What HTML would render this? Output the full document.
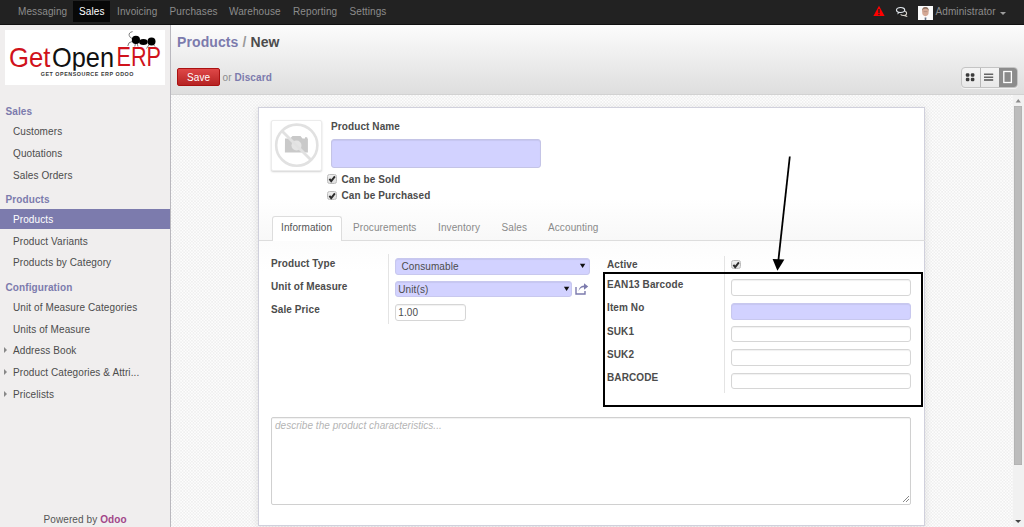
<!DOCTYPE html>
<html><head><meta charset="utf-8">
<style>
*{box-sizing:border-box;margin:0;padding:0}
html,body{width:1024px;height:527px;overflow:hidden;background:#fff}
body{font-family:"Liberation Sans",sans-serif;font-size:10px;color:#4c4c4c;position:relative}
.a{position:absolute}
.t{position:absolute;font-size:10px;line-height:11px;white-space:nowrap;letter-spacing:0.1px}
.b{font-weight:bold}
#nav{left:0;top:0;width:1024px;height:25px;background:#222;border-bottom:1px solid #111}
#nav .t{color:#8c8c8c}
#side{left:0;top:25px;width:171px;height:502px;background:#f0eeee;border-right:1px solid #b9b8be}
.sh{color:#7c7bad;font-weight:bold}
.si{color:#4c4c4c}
#hdr{left:171px;top:25px;width:853px;height:70px;background:linear-gradient(#fcfcfc,#dedede);border-bottom:1px solid #d2d2d2}
#bg{left:171px;top:95px;width:842px;height:432px;background-color:#f6f6f6}
#sb{left:1013px;top:95px;width:11px;height:432px;background:#f1f1f1}
#sheet{left:258px;top:107px;width:667px;height:419px;background:#fff;border:1px solid #d0d0dc;box-shadow:0 2px 8px rgba(0,0,0,.10)}
.inp{position:absolute;border:1px solid #ccc;border-radius:3px;background:#fff;box-shadow:inset 0 1px 1px rgba(0,0,0,.06)}
.req{background:#d2d2ff;border-color:#c4c4e6}
.cb{position:absolute;width:9.5px;height:9.5px;border:1px solid #bdbdbd;border-radius:2.5px;background:linear-gradient(#eeeeee,#dedede)}
</style></head><body>

<!-- top navbar -->
<div id="nav" class="a">
  <div class="a" style="left:73px;top:1px;width:37px;height:21px;background:#080808"></div>
  <div class="t" style="left:18px;top:6px">Messaging</div>
  <div class="t" style="left:79px;top:6px;color:#fff">Sales</div>
  <div class="t" style="left:117px;top:6px">Invoicing</div>
  <div class="t" style="left:169.5px;top:6px">Purchases</div>
  <div class="t" style="left:229px;top:6px">Warehouse</div>
  <div class="t" style="left:293px;top:6px">Reporting</div>
  <div class="t" style="left:349.5px;top:6px">Settings</div>
  <svg class="a" style="left:873px;top:5px" width="12" height="12" viewBox="0 0 12 12"><path d="M6 0.8 L11.6 11 L0.4 11 Z" fill="#f00"/><rect x="5.3" y="4" width="1.4" height="4" fill="#222"/><rect x="5.3" y="8.8" width="1.4" height="1.3" fill="#222"/></svg>
  <svg class="a" style="left:895px;top:6px" width="13" height="11" viewBox="0 0 13 11"><path d="M8.2 4.8 Q11.6 5 11.6 7.3 Q11.6 8.6 10.6 9 L11.4 10.2 L9 9.4 Q6.8 9.6 5.6 8.4" fill="#222" stroke="#d8d4cc" stroke-width="1.1"/><ellipse cx="5.6" cy="4" rx="4.1" ry="2.5" fill="#222" stroke="#e2e8ee" stroke-width="1.2"/><path d="M3.2 6.2 L2 8.4 L5.2 6.6" fill="#e2e8ee"/></svg>
  <svg class="a" style="left:918px;top:6px" width="15" height="14.2" viewBox="0 0 15 14.2">
   <rect width="15" height="14.2" fill="#fbfbfb"/>
   <ellipse cx="7.4" cy="5.6" rx="3.3" ry="4.6" fill="#d4a996"/>
   <path d="M4.1 5 Q4 1 7.4 1 Q10.8 1 10.7 5 Q10 2.6 7.4 2.8 Q4.8 2.6 4.1 5 Z" fill="#8d7262"/>
   <path d="M5.6 5.6 h3.8" stroke="#9a7c70" stroke-width="0.5"/>
   <path d="M6.6 11.6 h1.8 L8.2 14.2 h-1.4 Z" fill="#667489"/>
  </svg>
  <div class="t" style="left:935.5px;top:6px">Administrator</div>
  <div class="a" style="left:1000px;top:11.5px;width:0;height:0;border-left:3px solid transparent;border-right:3px solid transparent;border-top:3px solid #9d9d9d"></div>
</div>

<!-- sidebar -->
<div id="side" class="a">
  <div class="a" style="left:5px;top:5px;width:159.5px;height:54.5px;background:#fff"></div>
</div>
<svg class="a" style="left:0;top:24px" width="170" height="70" viewBox="0 24 170 70">
 <defs><clipPath id="lc"><rect x="0" y="24" width="170" height="46.8"/></clipPath></defs>
 <g font-family="Liberation Sans" font-size="28">
  <text x="9" y="66.6" fill="#d0121b" textLength="41.5" lengthAdjust="spacingAndGlyphs">Get</text>
  <text x="52" y="66.6" fill="#111" textLength="62" lengthAdjust="spacingAndGlyphs" clip-path="url(#lc)">Open</text>
  <text x="116.5" y="66.4" fill="#d0121b" textLength="44.5" lengthAdjust="spacingAndGlyphs">ERP</text>
 </g>
 <text x="40.7" y="76.3" font-family="Liberation Sans" font-weight="bold" font-size="6" fill="#383838" textLength="93.3" lengthAdjust="spacingAndGlyphs" letter-spacing="0.6">GET OPENSOURCE ERP ODOO</text>
 <g fill="none" stroke="#666" stroke-width="0.85">
  <path d="M132.6 31.6 Q128.5 32.5 129.2 35.5 Q129.8 37.5 132 38.5"/>
  <path d="M132 41.5 Q128 42 127.8 46"/>
  <path d="M135.5 43 L134.8 46.5 M137 43 L138 46.5 M149.5 44 L146.5 48.5 M153 44 L155 46.5"/>
 </g>
 <circle cx="135.9" cy="39.9" r="4.1" fill="#000"/>
 <ellipse cx="143.4" cy="42" rx="4.3" ry="2.9" fill="#000"/>
 <circle cx="151.5" cy="41.4" r="4" fill="#000"/>
</svg>

<div class="t sh" style="left:5.5px;top:106px">Sales</div>
<div class="t si" style="left:13px;top:126px">Customers</div>
<div class="t si" style="left:13px;top:148px">Quotations</div>
<div class="t si" style="left:13px;top:169.5px">Sales Orders</div>
<div class="t sh" style="left:5.5px;top:193.5px">Products</div>
<div class="a" style="left:0;top:209px;width:170px;height:20px;background:#7c7bad"></div>
<div class="t" style="left:13px;top:214px;color:#fff">Products</div>
<div class="t si" style="left:13px;top:235.5px">Product Variants</div>
<div class="t si" style="left:13px;top:257px">Products by Category</div>
<div class="t sh" style="left:5.5px;top:281.5px">Configuration</div>
<div class="t si" style="left:13px;top:302px">Unit of Measure Categories</div>
<div class="t si" style="left:13px;top:323.5px">Units of Measure</div>
<div class="t si" style="left:13px;top:345px">Address Book</div>
<div class="t si" style="left:13px;top:367px">Product Categories &amp; Attri...</div>
<div class="t si" style="left:13px;top:388.5px">Pricelists</div>
<div class="a" style="left:4px;top:347px;border-top:3px solid transparent;border-bottom:3px solid transparent;border-left:3px solid #888"></div>
<div class="a" style="left:4px;top:369px;border-top:3px solid transparent;border-bottom:3px solid transparent;border-left:3px solid #888"></div>
<div class="a" style="left:4px;top:390.5px;border-top:3px solid transparent;border-bottom:3px solid transparent;border-left:3px solid #888"></div>
<div class="t si" style="left:43.5px;top:514px;color:#555">Powered by <span class="b" style="color:#a24689">Odoo</span></div>

<!-- header -->
<div id="hdr" class="a"></div>
<div class="t b" style="left:177px;top:35.2px;font-size:14px;line-height:15px"><span style="color:#7c7bad">Products</span><span style="color:#9a9a9a"> / </span><span style="color:#4c4c4c">New</span></div>
<div class="a" style="left:177px;top:68px;width:43px;height:18px;border:1px solid #a11;border-radius:2px;background:linear-gradient(#df4848,#b52323)"></div>
<div class="t" style="left:187px;top:72px;color:#fff">Save</div>
<div class="t" style="left:222.5px;top:72px;color:#8c8c8c">or <span class="b" style="color:#7c7bad">Discard</span></div>
<div class="a" style="left:960.5px;top:67.2px;width:57px;height:20.5px;border:1px solid #c4c4c4;border-radius:4px;background:linear-gradient(#f4f4f4,#e8e8e8);overflow:hidden;box-shadow:0 1px 0 rgba(255,255,255,.6)">
  <div class="a" style="left:18.2px;top:0;width:0.8px;height:19px;background:#b8b8b8"></div>
  <div class="a" style="left:37px;top:0;width:19px;height:19px;background:#8c8c8c"></div>
</div>
<svg class="a" style="left:960px;top:67px" width="58" height="22" viewBox="960 67 58 22">
 <g fill="#3a3a3a"><rect x="965.8" y="73.3" width="3.6" height="3.4" rx="1.2"/><rect x="970.8" y="73.3" width="3.6" height="3.4" rx="1.2"/><rect x="965.8" y="77.8" width="3.6" height="3.4" rx="1.2"/><rect x="970.8" y="77.8" width="3.6" height="3.4" rx="1.2"/></g>
 <g fill="#444"><rect x="984" y="73.6" width="9.2" height="1.2"/><rect x="984" y="76.6" width="9.2" height="1.2"/><rect x="984" y="79.3" width="9.2" height="1.4"/></g>
 <rect x="1003.8" y="71.5" width="7.6" height="11" fill="#8a8a8a" stroke="#fff" stroke-width="1.3"/>
</svg>

<!-- content bg -->
<div id="bg" class="a"><svg width="842" height="432" style="position:absolute;left:0;top:0"><defs><pattern id="pt" patternUnits="userSpaceOnUse" width="3.1" height="3.1"><rect width="3.1" height="3.1" fill="#efefef"/><rect width="1.55" height="1.55" fill="#fdfdfd"/><rect x="1.55" y="1.55" width="1.55" height="1.55" fill="#fdfdfd"/></pattern></defs><rect width="842" height="432" fill="url(#pt)"/></svg></div>
<div id="sb" class="a">
  <div class="a" style="left:1.1px;top:10.6px;width:8px;height:359px;background:#bcbcbc;box-shadow:inset 0 0 0 0.5px #aaa"></div>
  <svg class="a" style="left:0;top:0" width="11" height="432" viewBox="1013 95 11 432"><path d="M1015.6 102.5 L1018.25 99.1 L1020.9 102.5 Z" fill="#8a8a8a"/><path d="M1015.1 519.9 L1021.1 519.9 L1018.1 522.9 Z" fill="#444"/></svg>
</div>

<!-- sheet -->
<div id="sheet" class="a"></div>
<!-- image -->
<div class="a" style="left:271px;top:120px;width:51px;height:51px;background:#fff;border:1px solid #ececec;border-radius:2px;box-shadow:0 1px 2px rgba(0,0,0,.18)"></div>
<svg class="a" style="left:272px;top:121px" width="50" height="50" viewBox="0 0 50 50">
  <circle cx="24.75" cy="24.2" r="20.6" fill="none" stroke="#e1e1e1" stroke-width="2.6"/>
  <path d="M13 17.5 h5 l2.5 -2.5 h8 l2 2.5 h2.5 v-1.2 h2.2 v1.2 h0.7 v14 h-23 z" fill="#c9c9c9"/>
  <circle cx="24.5" cy="24.5" r="5" fill="#e4e4e4"/>
  <path d="M10 10 L39 39" stroke="#e1e1e1" stroke-width="2.8"/>
</svg>
<div class="t b" style="left:331px;top:121.2px">Product Name</div>
<div class="inp req" style="left:331px;top:139px;width:210px;height:28.5px"></div>
<div class="cb" style="left:327.3px;top:174px"><svg width="8" height="8" viewBox="0 0 8 8" style="position:absolute;left:0;top:0"><path d="M1.4 3.9 L3.2 6.2 L6.9 1.4" fill="none" stroke="#2b2b2b" stroke-width="1.9" stroke-linejoin="miter"/></svg></div>
<div class="t b" style="left:341.5px;top:173.5px">Can be Sold</div>
<div class="cb" style="left:327.3px;top:190.7px"><svg width="8" height="8" viewBox="0 0 8 8" style="position:absolute;left:0;top:0"><path d="M1.4 3.9 L3.2 6.2 L6.9 1.4" fill="none" stroke="#2b2b2b" stroke-width="1.9" stroke-linejoin="miter"/></svg></div>
<div class="t b" style="left:341.5px;top:190.4px">Can be Purchased</div>

<!-- tabs -->
<div class="a" style="left:259px;top:198px;width:665px;height:42px;background:linear-gradient(rgba(255,255,255,0),#f8f8f8)"></div>
<div class="a" style="left:259px;top:241px;width:665px;height:30px;background:linear-gradient(#fcfcfc,rgba(255,255,255,0))"></div>
<div class="a" style="left:259px;top:240px;width:666px;height:1px;background:#ddd"></div>
<div class="a" style="left:271.5px;top:216px;width:70.5px;height:25px;background:#fff;border:1px solid #ddd;border-bottom:none;border-radius:3px 3px 0 0"></div>
<div class="t" style="left:281px;top:222.4px;color:#555">Information</div>
<div class="t" style="left:353px;top:222.4px;color:#8a8a8a">Procurements</div>
<div class="t" style="left:438px;top:222.4px;color:#8a8a8a">Inventory</div>
<div class="t" style="left:501.5px;top:222.4px;color:#8a8a8a">Sales</div>
<div class="t" style="left:548px;top:222.4px;color:#8a8a8a">Accounting</div>

<!-- left group -->
<div class="t b" style="left:271px;top:257.7px">Product Type</div>
<div class="t b" style="left:271px;top:280.5px">Unit of Measure</div>
<div class="t b" style="left:271px;top:304px">Sale Price</div>
<div class="a" style="left:388px;top:254px;width:1px;height:70px;background:#e4e4e4"></div>
<div class="inp req" style="left:395px;top:258px;width:195px;height:16.5px;border-color:#c8c8ee"></div>
<div class="t" style="left:401.5px;top:261.2px">Consumable</div>
<svg class="a" style="left:579px;top:263px" width="8" height="7" viewBox="0 0 8 7"><path d="M0.9 0.7 L6.3 0.7 L3.6 5.1 Z" fill="#111"/></svg>
<div class="inp req" style="left:395px;top:281.2px;width:177px;height:16.3px;border-color:#c8c8ee"></div>
<div class="t" style="left:398.3px;top:284.3px">Unit(s)</div>
<svg class="a" style="left:563px;top:286px" width="8" height="7" viewBox="0 0 8 7"><path d="M0.9 0.7 L6.3 0.7 L3.6 5.1 Z" fill="#111"/></svg>
<svg class="a" style="left:575px;top:283px" width="14" height="12" viewBox="0 0 14 12">
 <path d="M1 4 v7 h9 v-3" fill="none" stroke="#7c7bad" stroke-width="1.4"/>
 <path d="M3.5 8.5 Q4.5 4.5 9 4.3 V6.8 L13.2 3.4 L9 0.2 V2.6 Q4 3 3.5 8.5 Z" fill="#7c7bad"/>
</svg>
<div class="inp" style="left:395px;top:304.3px;width:71px;height:17px;border-color:#d6d6d6"></div>
<div class="t" style="left:398.3px;top:306.6px">1.00</div>

<!-- right group -->
<div class="t b" style="left:607px;top:258.7px">Active</div>
<div class="a" style="left:724px;top:256px;width:1px;height:137px;background:#e4e4e4"></div>
<div class="cb" style="left:731px;top:259.5px"><svg width="8" height="8" viewBox="0 0 8 8" style="position:absolute;left:0;top:0"><path d="M1.4 3.9 L3.2 6.2 L6.9 1.4" fill="none" stroke="#2b2b2b" stroke-width="1.9" stroke-linejoin="miter"/></svg></div>
<div class="t b" style="left:607px;top:278.8px">EAN13 Barcode</div>
<div class="inp" style="left:731px;top:279.2px;width:180px;height:17.2px;border-color:#d6d6d6"></div>
<div class="t b" style="left:607px;top:302px">Item No</div>
<div class="inp req" style="left:731px;top:303.1px;width:180px;height:16.6px;border-color:#c8c8ee"></div>
<div class="t b" style="left:607px;top:325.5px">SUK1</div>
<div class="inp" style="left:731px;top:326.3px;width:180px;height:16.2px;border-color:#d6d6d6"></div>
<div class="t b" style="left:607px;top:348.6px">SUK2</div>
<div class="inp" style="left:731px;top:349.4px;width:180px;height:16.5px;border-color:#d6d6d6"></div>
<div class="t b" style="left:607px;top:371.6px">BARCODE</div>
<div class="inp" style="left:731px;top:372.6px;width:180px;height:16.7px;border-color:#d6d6d6"></div>
<div class="a" style="left:603px;top:272px;width:319.5px;height:134.5px;border:2px solid #000"></div>
<svg class="a" style="left:760px;top:150px" width="40" height="130" viewBox="760 150 40 130">
 <path d="M789.8 156.5 L778.2 262" stroke="#000" stroke-width="1.8" fill="none"/>
 <path d="M772.6 259 L784.4 259.6 L777.4 270.8 Z" fill="#000"/>
</svg>

<!-- textarea -->
<div class="inp" style="left:271px;top:417px;width:640px;height:88px;border-color:#d0d0d0;border-radius:2px"></div>
<div class="t" style="left:275px;top:420px;font-style:italic;color:#b4b4b4;letter-spacing:0.03px">describe the product characteristics...</div>
<svg class="a" style="left:902px;top:495px" width="8" height="8" viewBox="0 0 8 8"><path d="M7 1 L1 7 M7 4 L4 7" stroke="#888" stroke-width="1"/></svg>

</body></html>
